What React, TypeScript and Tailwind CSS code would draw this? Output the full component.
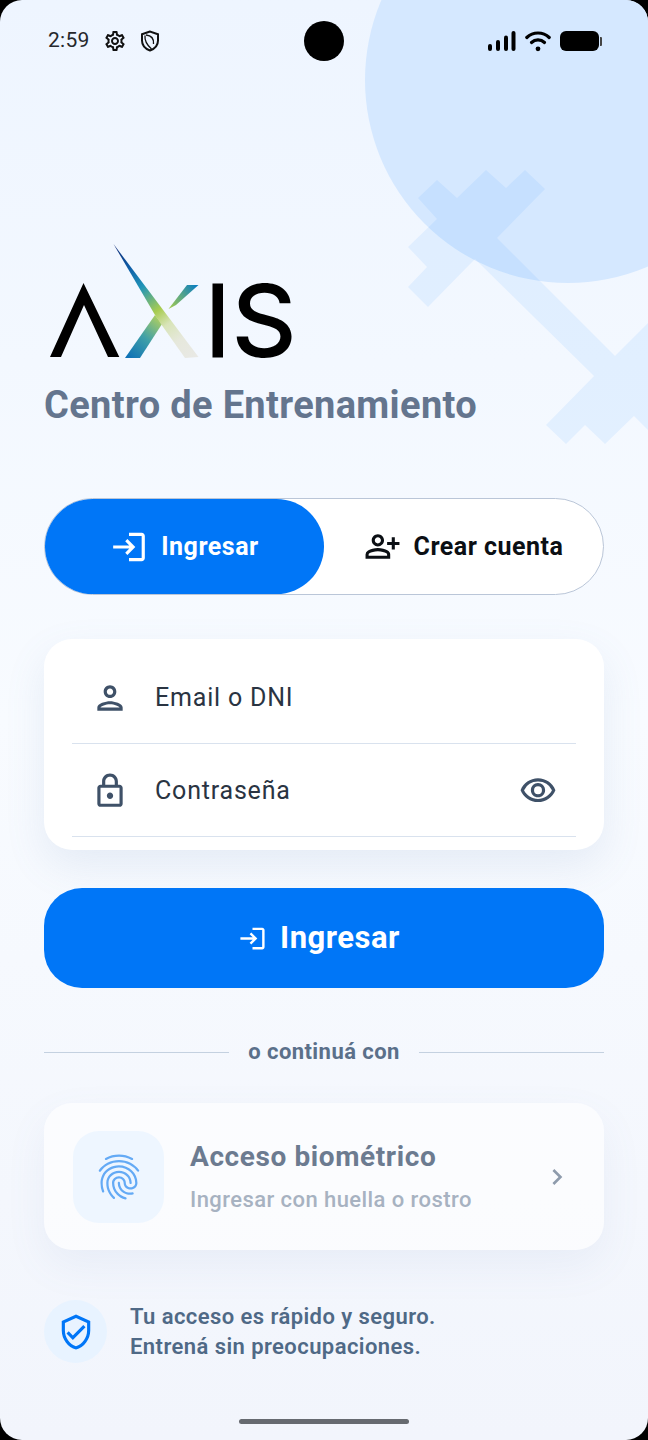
import React from "react";
import { MdFingerprint, MdLogin, MdOutlineChevronRight, MdOutlineLock, MdOutlinePerson, MdOutlinePersonAddAlt, MdOutlineSettings, MdOutlineVerifiedUser, MdOutlineVisibility } from "react-icons/md";

function Decor() {
  return (
    <div className="absolute inset-0 overflow-hidden pointer-events-none">
      <div className="absolute left-[365px] top-[-123px] w-[406px] h-[406px] rounded-full bg-[#d5e8ff]" />
      <svg className="absolute left-0 top-0" width="648" height="460" viewBox="0 0 648 460">
        <polygon
          fill="#007aff"
          fillOpacity="0.07"
          points="418,198 437,180 457,198 486,170 506,188 525,170 545,189 497,238 615,356 648,323 648,430 634,416 605,444 585,425 566,444 546,425 594,376 475,259 428,307 408,287 427,267 408,247 437,219"
        />
      </svg>
    </div>
  );
}

function StatusBar() {
  return (
    <div className="relative flex items-center h-[82px] pl-[48px] pr-[45px]">
      <span className="text-[21px] text-[#26282c] tracking-[0.3px] leading-none -mt-[2px]">2:59</span>
      <MdOutlineSettings className="ml-[13px] text-[24px] text-[#111]" />
      <svg className="ml-[13px]" width="20" height="22" viewBox="0 0 20 22" fill="none" stroke="#111" strokeWidth="2">
        <path d="M10 1.500 2 4.200v6.300c0 4.600 3.300 8.300 8 10 4.700-1.700 8-5.400 8-10V4.200z" />
        <path d="M5 5.500C4.500 10 7 15 11.500 19M6 5C11 5.500 14 8.500 13.500 14" strokeWidth="1.300" />
      </svg>
      <div className="absolute left-[304px] top-[21px] w-[40px] h-[40px] rounded-full bg-black" />
      <div className="ml-auto mr-[1px] flex items-center">
        <svg width="28" height="22" viewBox="0 0 28 22" fill="#000">
          <rect x="0" y="14" width="4" height="7" rx="2" />
          <rect x="8" y="10" width="4" height="11" rx="2" />
          <rect x="16" y="5.500" width="4" height="15.500" rx="2" />
          <rect x="23.500" y="1" width="4" height="20" rx="2" />
        </svg>
        <svg className="ml-[9px]" width="26" height="22" viewBox="0 0 26 22" fill="none" stroke="#000" strokeWidth="3.200" strokeLinecap="round">
          <path d="M1.800 7.500C8 1.500 18 1.500 24.200 7.500" />
          <path d="M6.500 12.500c3.700-3.500 9.300-3.500 13 0" />
          <circle cx="13" cy="18.800" r="2.400" fill="#000" stroke="none" />
        </svg>
        <div className="ml-[9px] w-[39px] h-[20px] rounded-[6px] bg-black" />
        <div className="ml-[1px] w-[2px] h-[9px] rounded-r-[1px] bg-[#444]" />
      </div>
    </div>
  );
}

function Logo() {
  return (
    <svg className="block ml-[48px] mt-[162px] overflow-visible" width="250" height="118" viewBox="48 244 250 118">
      <defs>
        <linearGradient id="main" x1="114" y1="244" x2="198" y2="358" gradientUnits="userSpaceOnUse">
          <stop offset="0" stopColor="#0b2470" />
          <stop offset="0.2" stopColor="#0f5ea8" />
          <stop offset="0.36" stopColor="#1f94b8" />
          <stop offset="0.56" stopColor="#a8cc50" />
          <stop offset="0.68" stopColor="#d8e4b8" />
          <stop offset="0.82" stopColor="#e6e8dc" />
          <stop offset="1" stopColor="#e9e9e6" />
        </linearGradient>
        <linearGradient id="leg" x1="125" y1="357" x2="160" y2="315" gradientUnits="userSpaceOnUse">
          <stop offset="0" stopColor="#0b6fb8" />
          <stop offset="0.5" stopColor="#3f9fa8" />
          <stop offset="1" stopColor="#b8d35a" />
        </linearGradient>
        <linearGradient id="arm" x1="168" y1="308" x2="196" y2="285" gradientUnits="userSpaceOnUse">
          <stop offset="0" stopColor="#a6cc4c" />
          <stop offset="1" stopColor="#0c7fc0" />
        </linearGradient>
      </defs>
      <polygon points="50,357 83.500,283 119.300,357 108,357 84,305 61,357" fill="#000" />
      <polygon points="125,358 155,315 162,324 140,358" fill="url(#leg)" />
      <polygon points="113.500,244 198.500,357 185,358 161,324 155,315" fill="url(#main)" />
      <polygon points="187,285 198.500,285 176,305 168.500,309" fill="url(#arm)" />
      <rect x="212.500" y="283.500" width="10.500" height="74" fill="#000" />
      <text x="231.500" y="357" fontFamily="Inter, sans-serif" fontWeight="500" fontSize="101" fill="#000">S</text>
    </svg>
  );
}

function Tabs() {
  return (
    <div className="flex h-[97px] rounded-full border border-[#bac6d8] bg-white">
      <div className="flex w-[279px] items-center justify-center gap-[13px] rounded-full bg-[#0076f7] text-white">
        <MdLogin className="text-[38px]" />
        <span className="text-[25px] font-bold tracking-[0.5px]">Ingresar</span>
      </div>
      <div className="flex flex-1 items-center justify-center gap-[13px] text-[#0b0f14]">
        <MdOutlinePersonAddAlt className="text-[37px]" />
        <span className="text-[25px] font-bold tracking-[0.5px]">Crear cuenta</span>
      </div>
    </div>
  );
}

function Field({ icon, label, trailing }: { icon: React.ReactNode; label: string; trailing?: React.ReactNode }) {
  return (
    <div className="flex h-[93px] items-center border-b border-[#d9e2ee] pl-[19px] pr-[19px] pt-[2px]">
      <span className="flex w-[38px] shrink-0 justify-center text-[#3f5168]">{icon}</span>
      <span className="ml-[26px] text-[25px] tracking-[0.8px] text-[#2a3442]">{label}</span>
      {trailing && <span className="ml-auto text-[#3f5168]">{trailing}</span>}
    </div>
  );
}

export default function App() {
  return (
    <div className="bg-black">
      <div
        className="relative h-[1440px] w-[648px] overflow-hidden rounded-[22px] bg-gradient-to-b from-[#eef5ff] via-[#f8fbff] to-[#f2f5fc]"
        style={{ fontFamily: "Roboto, sans-serif" }}
      >
        <Decor />
        <div className="relative">
          <StatusBar />
          <Logo />
          <div className="px-[44px]">
            <h1 className="mt-[18px] text-[38px] font-bold leading-[50px] tracking-[0.35px] text-[#64758e] whitespace-nowrap">Centro de Entrenamiento</h1>
            <div className="mt-[68px]"><Tabs /></div>
            <div className="mt-[44px] h-[211px] rounded-[28px] bg-white px-[28px] pt-[12px] shadow-[0_16px_40px_rgba(100,130,180,0.12)]">
              <Field icon={<MdOutlinePerson className="text-[38px]" />} label="Email o DNI" />
              <Field icon={<MdOutlineLock className="text-[38px]" />} label="Contraseña" trailing={<MdOutlineVisibility className="text-[38px]" />} />
            </div>
            <div className="mt-[38px] flex h-[100px] items-center justify-center gap-[13px] rounded-[38px] bg-[#0076f7] pr-[10px] pt-[1px] text-white">
              <MdLogin className="text-[29px]" />
              <span className="text-[31px] font-bold tracking-[0.5px]">Ingresar</span>
            </div>
            <div className="mt-[52px] flex items-center gap-[19px]">
              <div className="h-px flex-1 bg-[#c4d1e0]" />
              <span className="text-[22px] font-bold leading-[24px] tracking-[0.43px] text-[#5b708a]">o continuá con</span>
              <div className="h-px flex-1 bg-[#c4d1e0]" />
            </div>
            <div className="mt-[39px] flex h-[147px] items-center rounded-[28px] bg-white/60 pl-[29px] pr-[31px] shadow-[0_16px_40px_rgba(100,130,180,0.08)]">
              <div className="flex h-[92px] w-[91px] items-center justify-center rounded-[26px] bg-[#eef6ff]">
                <MdFingerprint className="text-[54px] text-[#64aaf5]" />
              </div>
              <div className="ml-[26px]">
                <div className="text-[28px] font-bold leading-[36px] tracking-[0.6px] text-[#6c7b90]">Acceso biométrico</div>
                <div className="mt-[11px] text-[22px] font-medium leading-[28px] tracking-[0.43px] text-[#a7b2c1]">Ingresar con huella o rostro</div>
              </div>
              <MdOutlineChevronRight className="ml-auto text-[32px] text-[#8e9bac]" />
            </div>
            <div className="mt-[50px] flex items-center">
              <div className="flex h-[63px] w-[63px] items-center justify-center rounded-full bg-[#e8f3ff]">
                <MdOutlineVerifiedUser className="text-[38px] text-[#0076f7]" />
              </div>
              <div className="ml-[23px] text-[22px] font-semibold leading-[30px] tracking-[0.43px] text-[#4f6986]">
                <div>Tu acceso es rápido y seguro.</div>
                <div>Entrená sin preocupaciones.</div>
              </div>
            </div>
          </div>
        </div>
        <div className="absolute bottom-[16px] left-[239px] h-[5px] w-[170px] rounded-full bg-[#666a70]" />
      </div>
    </div>
  );
}
